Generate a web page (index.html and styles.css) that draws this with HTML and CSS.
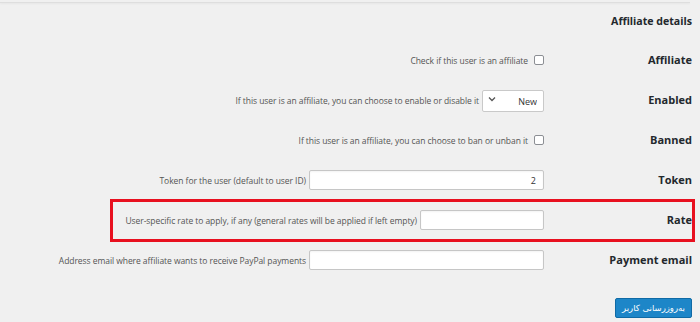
FILE: index.html
```html
<!DOCTYPE html>
<html lang="fa" dir="rtl">
<head>
    <meta charset="utf-8">
    <title>Affiliate details</title>
    <link rel="stylesheet" href="styles.css">
</head>
<body>
    <div class="topLine"></div>
    <div class="wrap">
        <h2 class="sectionTitle">Affiliate details</h2>

        <div class="formTable">
            <div class="row">
                <div class="rowLabel">Affiliate</div>
                <div class="rowField">
                    <input type="checkbox" class="check">
                    <span class="desc">Check if this user is an affiliate</span>
                </div>
            </div>

            <div class="row">
                <div class="rowLabel">Enabled</div>
                <div class="rowField">
                    <span class="selectBox">
                        <select class="select">
                            <option>New</option>
                        </select>
                        <svg class="chevron" width="8" height="6" viewBox="0 0 8 6"><path d="M1 1.5 L4 4.5 L7 1.5" fill="none" stroke="#555" stroke-width="1.3"/></svg>
                    </span>
                    <span class="desc">If this user is an affiliate, you can choose to enable or disable it</span>
                </div>
            </div>

            <div class="row">
                <div class="rowLabel">Banned</div>
                <div class="rowField">
                    <input type="checkbox" class="check">
                    <span class="desc">If this user is an affiliate, you can choose to ban or unban it</span>
                </div>
            </div>

            <div class="row">
                <div class="rowLabel">Token</div>
                <div class="rowField">
                    <input type="text" class="textInput wide" value="2">
                    <span class="desc">Token for the user (default to user ID)</span>
                </div>
            </div>

            <div class="row highlight">
                <div class="rowLabel">Rate</div>
                <div class="rowField">
                    <input type="text" class="textInput short">
                    <span class="desc">User-specific rate to apply, if any (general rates will be applied if left empty)</span>
                </div>
            </div>

            <div class="row">
                <div class="rowLabel">Payment email</div>
                <div class="rowField">
                    <input type="text" class="textInput wide">
                    <span class="desc">Address email where affiliate wants to receive PayPal payments</span>
                </div>
            </div>
        </div>

        <div class="submitRow">
            <button class="primaryButton">به‌روزرسانی کاربر</button>
        </div>
    </div>
</body>
</html>
```

FILE: styles.css
```css
body {
    margin: 0;
    background-color: #f0f0f0;
    font-family: 'Open Sans', 'Noto Sans', Arial, sans-serif;
    color: #444444;
}

.topLine {
    margin-top: 2px;
    margin-right: 10px;
    height: 1px;
    background-color: #dedede;
    box-shadow: 0 1px 2px rgba(0, 0, 0, 0.06);
}

.wrap {
    padding-right: 8px;
}

.sectionTitle {
    margin: 0;
    height: 37px;
    line-height: 37px;
    font-size: 10.6px;
    font-weight: 700;
    color: #23282d;
}

.formTable {
    display: flex;
    flex-direction: column;
}

.row {
    position: relative;
    display: flex;
    align-items: center;
    height: 40px;
}

.rowLabel {
    width: 148px;
    flex-shrink: 0;
    line-height: 12px;
    font-size: 11px;
    font-weight: 700;
    color: #23282d;
}

.rowField {
    display: flex;
    align-items: center;
    gap: 3px;
}

.desc {
    direction: ltr;
    unicode-bidi: isolate;
    font-size: 8.5px;
    letter-spacing: -0.06px;
    color: #555555;
}

.check {
    appearance: none;
    margin: 0 0 0 3px;
    width: 10px;
    height: 10px;
    border: 1px solid #8c8f94;
    border-radius: 2px;
    background-color: #ffffff;
}

.selectBox {
    position: relative;
    display: inline-block;
}

.select {
    appearance: none;
    width: 62px;
    height: 22px;
    padding: 0 6px 0 0;
    border: 1px solid #c9c9c9;
    border-radius: 2px;
    background-color: #ffffff;
    font-family: inherit;
    font-size: 9px;
    color: #333333;
    text-align: right;
}

.chevron {
    position: absolute;
    left: 6px;
    top: 8px;
}

.textInput {
    height: 20px;
    box-sizing: border-box;
    padding: 0 7px;
    border: 1px solid #c6c6c6;
    border-radius: 2px;
    background-color: #ffffff;
    box-shadow: inset 0 1px 2px rgba(0, 0, 0, 0.05);
    font-family: inherit;
    font-size: 9px;
    color: #333333;
}

.textInput.wide {
    width: 235px;
}

.textInput.short {
    width: 124px;
}

.highlight::after {
    content: "";
    position: absolute;
    top: -1px;
    bottom: -2px;
    left: 110px;
    right: -3px;
    border: 3px solid #e8101f;
}

.submitRow {
    padding-top: 14px;
}

.primaryButton {
    height: 20px;
    width: 77px;
    padding: 0;
    border: 1px solid #0f6aa5;
    border-radius: 2px;
    background-color: #1d86c8;
    color: #ffffff;
    font-family: 'DejaVu Sans', sans-serif;
    font-size: 8.5px;
}
```
